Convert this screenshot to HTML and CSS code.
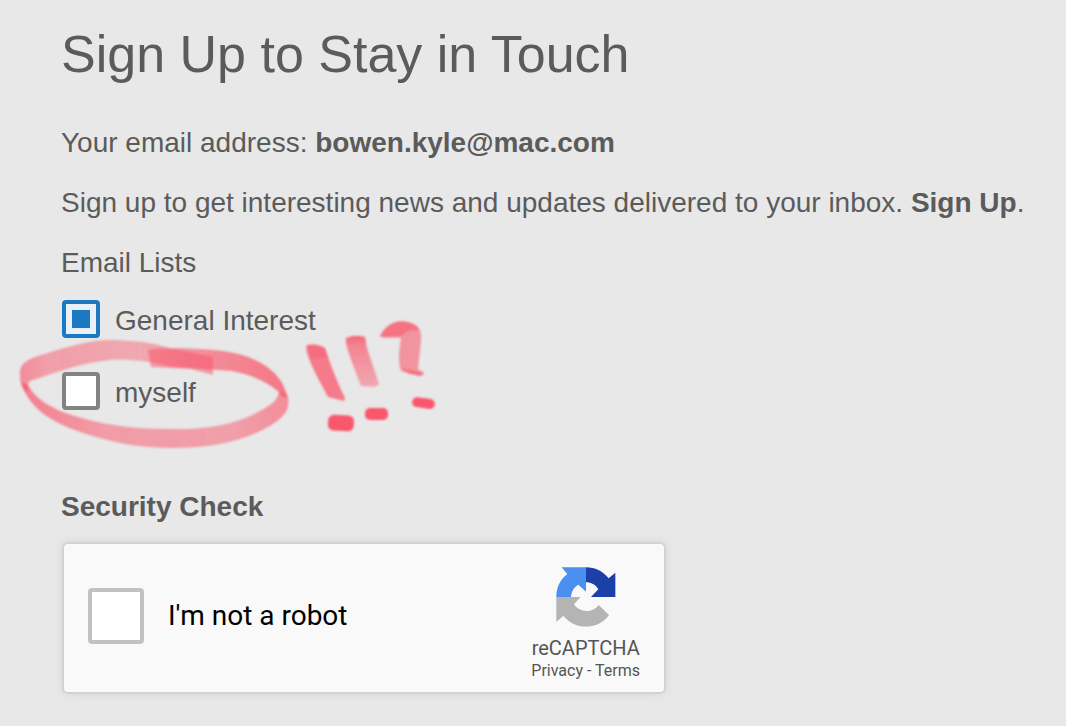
FILE: index.html
```html
<!DOCTYPE html>
<html lang="en">
<head>
<meta charset="utf-8">
<meta name="viewport" content="width=device-width, initial-scale=1">
<title>Sign Up to Stay in Touch</title>
<link rel="stylesheet" href="styles.css">
</head>
<body>
<main class="page">
  <h1 class="title">Sign Up to Stay in Touch</h1>
  <form class="form">
    <p class="text">Your email address: <strong>bowen.kyle@mac.com</strong></p>
    <p class="text">Sign up to get interesting news and updates delivered to your inbox. <strong>Sign Up</strong>.</p>
    <fieldset class="lists">
      <legend class="legend">Email Lists</legend>
      <div class="options">
        <label class="option"><input class="check" type="checkbox" checked>General Interest</label>
        <label class="option"><input class="check" type="checkbox">myself</label>
      </div>
      <svg class="marker" viewBox="0 310 450 150" aria-hidden="true">
        <defs>
          <filter id="soft"><feGaussianBlur stdDeviation="0.9"/></filter>
          <linearGradient id="fade" x1="0" y1="0" x2="0" y2="1">
            <stop offset="0" stop-color="#fa5065" stop-opacity=".85"/>
            <stop offset=".2" stop-color="#fa5065" stop-opacity=".65"/>
            <stop offset="1" stop-color="#fa5065" stop-opacity=".42"/>
          </linearGradient>
          <linearGradient id="top" x1="0" y1="0" x2="1" y2="0">
            <stop offset="0" stop-color="#fa5065" stop-opacity=".6"/>
            <stop offset=".1" stop-color="#fa5065" stop-opacity=".48"/>
            <stop offset=".45" stop-color="#fa5065" stop-opacity=".42"/>
            <stop offset=".7" stop-color="#fa5065" stop-opacity=".6"/>
            <stop offset="1" stop-color="#fa5065" stop-opacity=".75"/>
          </linearGradient>
          <linearGradient id="bottom" x1="0" y1="0" x2="1" y2="0">
            <stop offset="0" stop-color="#fa5065" stop-opacity=".7"/>
            <stop offset=".3" stop-color="#fa5065" stop-opacity=".5"/>
            <stop offset=".8" stop-color="#fa5065" stop-opacity=".48"/>
            <stop offset="1" stop-color="#fa5065" stop-opacity=".6"/>
          </linearGradient>
        </defs>
        <g filter="url(#soft)" fill="#fa5065">
          <path fill="url(#top)" d="M20 376C19 366 24 361 35 357C60 349 85 341 105 340C132 340 150 342 170 348C200 348 225 350 242 355C268 363 283 377 287 396L287 398L279 394L279 392C268 382 252 375 232 371L171 367C150 361 130 359 110 360C80 363 52 374 30 381C27 384 28 388 29 391L25 391C21 386 20 381 20 376Z"/>
          <path fill="url(#bottom)" d="M21 382L28 385C36 401 58 412 82 418C108 426 140 429 170 429C210 430 238 423 258 412C271 405 278 400 279 392L287 394C289 400 289 406 286 412C276 426 250 438 220 444C190 450 150 449 120 443C85 435 50 424 34 405C27 397 23 390 21 382Z"/>
          <path opacity=".5" d="M148 350C170 345 194 353 213 357L213 375L191 369L151 367Z"/>
          <path opacity=".72" d="M307 345Q317 343 325 348C329 360 337 382 345 398L344 401L328 397C319 380 308 361 306 348Z"/>
          <path opacity=".3" d="M307 345Q317 343 325 348L328 357L311 359Z"/>
          <path fill="url(#fade)" d="M346 338Q355 334 365 337L367 348L379 384L375 387L361 386C356 373 348 353 346 343Z"/>
          <path opacity=".55" d="M380 336C386 324 397 319 408 322C419 325 422 330 421 341L418 369L424 373L419 376L401 371C397 358 400 347 401 336C394 337 387 339 381 337Z"/>
          <path opacity=".5" d="M380 336C386 324 397 319 408 322C414 324 418 325 419 331Q408 327 400 338Z"/>
          <path opacity=".55" d="M401 368L424 373L422 376L409 374Z"/>
          <rect x="328" y="415" width="26" height="16" rx="6" opacity=".95" transform="rotate(3 341 423)"/>
          <rect x="365" y="408" width="23" height="12" rx="5" opacity=".95"/>
          <rect x="412" y="398" width="23" height="10" rx="5" opacity=".95" transform="rotate(8 423 403)"/>
        </g>
      </svg>
    </fieldset>
    <h2 class="subtitle">Security Check</h2>
    <div class="captcha">
      <label class="robot"><input class="robot-check" type="checkbox">I'm not a robot</label>
      <div class="brand">
        <svg class="logo" viewBox="135 75 186 186" aria-hidden="true">
          <path fill="#4a90f0" d="M228 79H155L172 99C150 115 139 140 139 168H183C184 152 192 138 205 131L228 152Z"/>
          <path fill="#1c3fa8" d="M228 79C255 79 278 90 296 112L316 95V168H243L265 145C256 130 243 124 228 124Z"/>
          <path fill="#b4b4b4" d="M139 168H212L192 190C205 212 245 220 266 192L297 222C265 268 195 268 160 224L139 243Z"/>
        </svg>
        <span class="brand-name">reCAPTCHA</span>
        <span class="brand-links"><a href="#privacy">Privacy</a> - <a href="#terms">Terms</a></span>
      </div>
    </div>
  </form>
</main>
</body>
</html>
```
FILE: styles.css
```css
* {
  box-sizing: border-box;
}

body {
  margin: 0;
  background: #e8e8e8;
  color: #5b5b5b;
  font: 28px/40px "Liberation Sans", Arial, sans-serif;
}

.page {
  padding: 22px 32px 32px 61px;
}

.title {
  margin: 0 0 37px;
  font-size: 52px;
  line-height: 64px;
  font-weight: 400;
}

.text {
  margin: 0 0 20px;
}

.lists {
  position: relative;
  margin: 0 0 73px;
  padding: 0;
  border: 0;
}

.legend {
  margin: 0 0 17px;
  padding: 0;
}

.options {
  display: flex;
  flex-direction: column;
  align-items: flex-start;
  gap: 30px;
  padding-left: 1px;
}

.option {
  display: flex;
  align-items: flex-start;
  gap: 15px;
  line-height: 42px;
}

.check {
  appearance: none;
  width: 38px;
  height: 38px;
  margin: 0;
  border: 4px solid #858282;
  border-radius: 4px;
  background: #fff;
}

.check:checked {
  border-color: #1a79c2;
  background: #1a79c2;
  box-shadow: inset 0 0 0 6px #eaf0fa;
}

.marker {
  position: absolute;
  left: -61px;
  top: 10px;
  width: 450px;
  height: 150px;
  pointer-events: none;
}

.subtitle {
  margin: 0 0 15px;
  font-size: 28px;
  line-height: 40px;
  font-weight: 700;
}

.captcha {
  display: flex;
  align-items: center;
  justify-content: space-between;
  max-width: 604px;
  margin-left: 1px;
  padding: 0 24px;
  border: 2px solid #d3d3d3;
  border-radius: 6px;
  background: #f9f9f9;
  box-shadow: 0 0 8px rgba(0, 0, 0, 0.08);
  font-family: Roboto, sans-serif;
}

.robot {
  display: flex;
  align-items: center;
  gap: 24px;
  padding-bottom: 4px;
  color: #000;
}

.robot-check {
  appearance: none;
  width: 56px;
  height: 56px;
  margin: 0;
  border: 4px solid #c1c1c1;
  border-radius: 4px;
  background: #fff;
}

.brand {
  display: flex;
  flex-direction: column;
  align-items: center;
  padding: 22px 0 10px;
  color: #555;
}

.logo {
  width: 62px;
  height: 62px;
  margin-bottom: 8px;
}

.brand-name {
  font-size: 20px;
  line-height: 24px;
}

.brand-links {
  font-size: 16px;
  line-height: 22px;
}

.brand-links a {
  color: inherit;
  text-decoration: none;
}
```
